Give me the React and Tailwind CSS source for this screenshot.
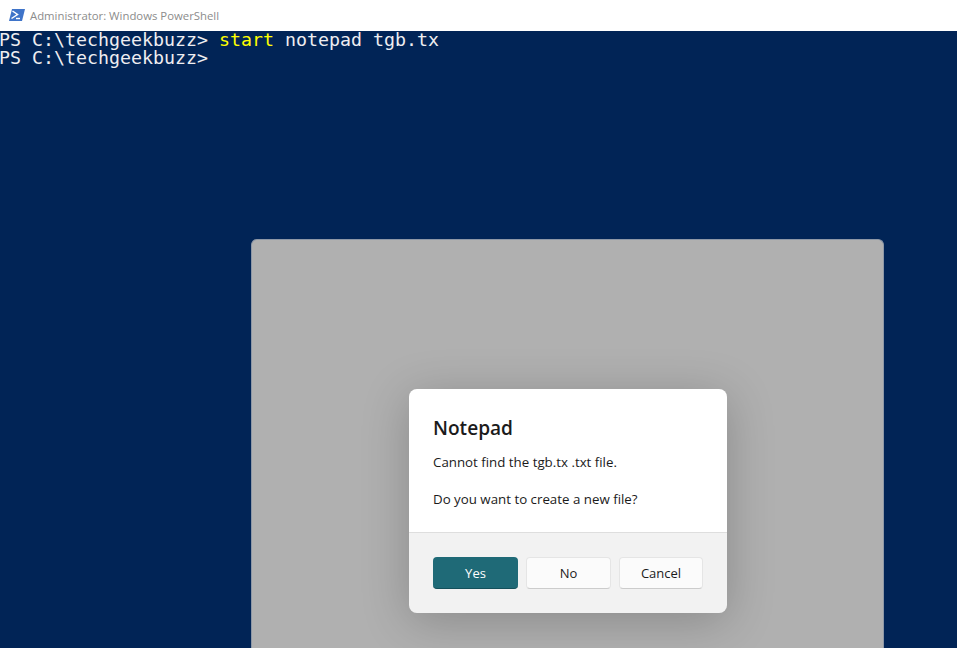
export default function App() {
  return (
    <div className="w-[957px] h-[648px] overflow-hidden flex flex-col bg-[#012456]">
      <div className="h-[31px] shrink-0 bg-white flex items-center pl-[9px] gap-[5px] font-['Open_Sans',sans-serif] text-[11.35px] text-[#8c8c8c]">
        <svg width="16" height="12" viewBox="0 0 16 12" className="mb-[2px]">
          <path d="M3 0H16L13 12H0Z" fill="#3f74c9" />
          <path d="M3.5 2L8.5 5.5L2.5 9.5" stroke="#fff" strokeWidth="1.5" fill="none" />
          <path d="M7 9.5H11" stroke="#fff" strokeWidth="1.4" fill="none" />
        </svg>
        <span>Administrator: Windows PowerShell</span>
      </div>
      <div className="flex-1 min-h-0 flex flex-col overflow-hidden">
        <div className="-ml-px font-['DejaVu_Sans_Mono',monospace] text-[18.28px] leading-[18px] text-[#eeedf0] whitespace-pre">
          <div>PS C:\techgeekbuzz&gt; <span className="text-[#ffff00]">start</span> notepad tgb.tx</div>
          <div>PS C:\techgeekbuzz&gt;</div>
        </div>
        <div className="ml-[251px] mt-[172px] w-[633px] flex-1 shrink-0 rounded-t-[6px] bg-[#b0b0b0] border border-b-0 border-[#8d97a6] pl-[157px] pt-[149px]">
          <div className="w-[318px] h-[224px] rounded-[8px] overflow-hidden flex flex-col shadow-[0_8px_48px_rgba(0,0,0,0.22)] font-['Open_Sans',sans-serif] text-[#1b1b1b]">
            <div className="h-[144px] shrink-0 bg-white border-b border-[#dedede] pl-6 pt-[25px]">
              <div className="text-[19.1px] leading-[28px] font-semibold">Notepad</div>
              <div className="mt-[11px] text-[13.3px] leading-[19px]">Cannot find the tgb.tx .txt file.</div>
              <div className="mt-[18px] text-[13.3px] leading-[19px]">Do you want to create a new file?</div>
            </div>
            <div className="flex-1 bg-[#f2f2f2] flex items-start gap-2 pl-6 pt-6 text-[13px]">
              <button className="w-[85px] h-[32px] pt-[2px] rounded-[4px] bg-[#1f6a77] border-b border-[#14505b] text-white">Yes</button>
              <button className="w-[85px] h-[32px] pt-[2px] rounded-[4px] bg-[#fbfbfb] border border-[#e5e5e5] border-b-[#cccccc]">No</button>
              <button className="w-[84px] h-[32px] pt-[2px] rounded-[4px] bg-[#fbfbfb] border border-[#e5e5e5] border-b-[#cccccc]">Cancel</button>
            </div>
          </div>
        </div>
      </div>
    </div>
  );
}
